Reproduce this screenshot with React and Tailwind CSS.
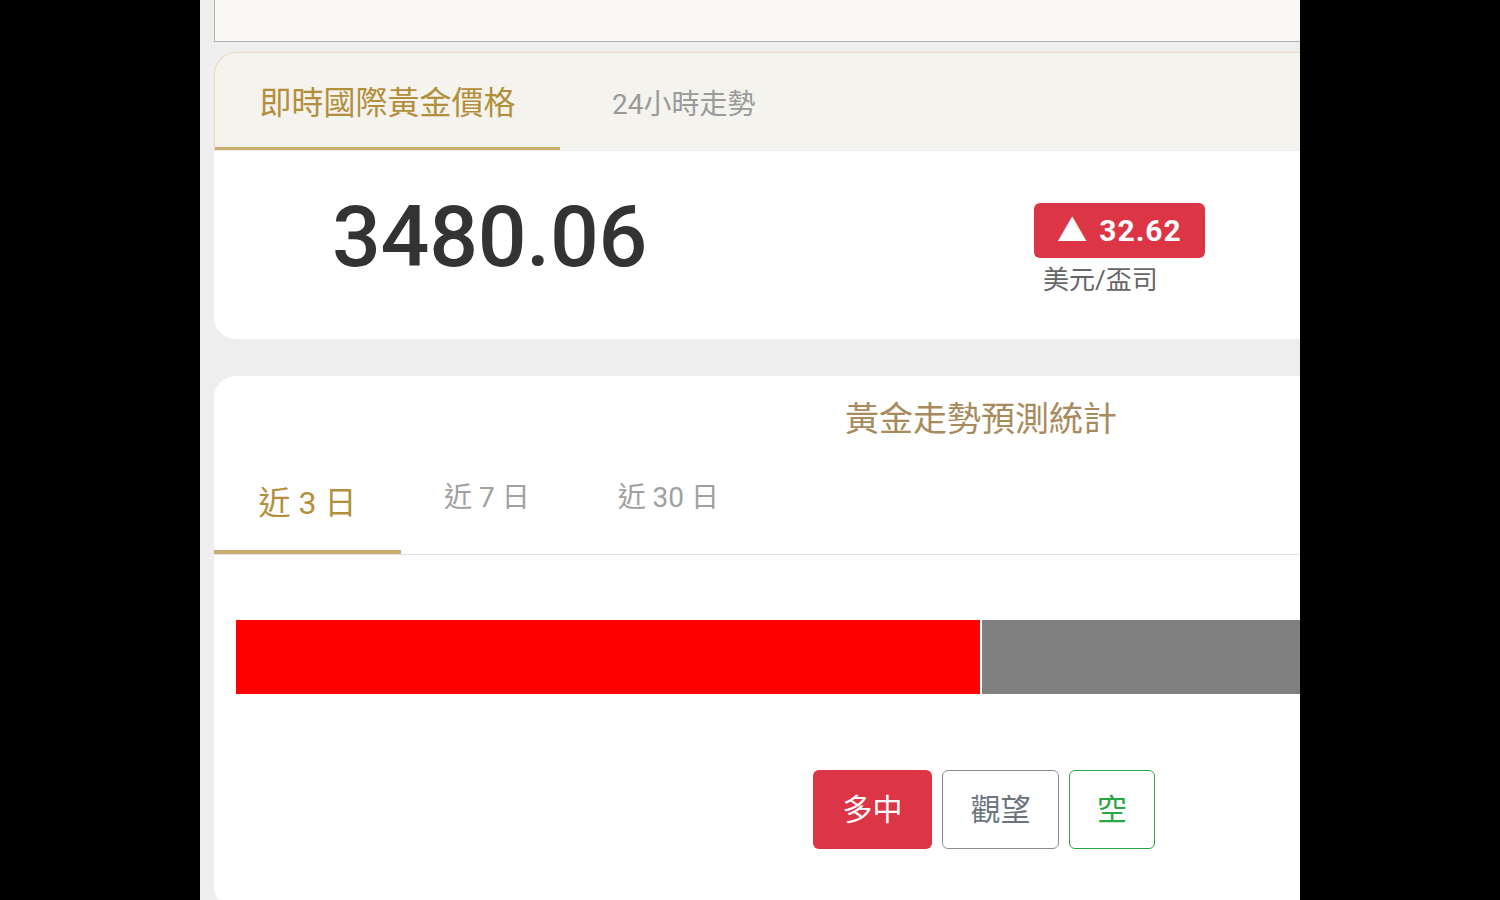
const cjk = { fontFamily: 'Roboto, "Noto Sans CJK TC", "Noto Sans", sans-serif' };

function TopTabs() {
  return (
    <div className="flex h-[98px] w-[1200px] rounded-tl-[22px] border-l border-t border-[#eadcb8] bg-[#f4f3ee]">
      <div className="flex w-[345px] items-center justify-center border-b-[3px] border-[#c9ad6a] pt-[6px]">
        <span className="text-[32px] text-[#b38f3c]">即時國際黃金價格</span>
      </div>
      <div className="flex items-center pl-[52px] pt-[6px]">
        <span className="text-[28px] text-[#9a9a9a]">24小時走勢</span>
      </div>
    </div>
  );
}

function PriceCard() {
  return (
    <div className="flex h-[188px] w-[1200px] items-center rounded-bl-[22px] bg-white">
      <div className="w-[820px] pl-[118px] pb-[16px]">
        <span className="text-[86px] font-medium leading-none tracking-[-0.3px] text-[#333333]">3480.06</span>
      </div>
      <div className="flex flex-col items-start pt-[10px]">
        <div className="flex h-[55px] w-[171px] items-center justify-center gap-[12px] rounded-[6px] bg-[#dc3545] text-white">
          <span className="text-[30px] leading-none">▲</span>
          <span className="text-[30px] font-bold leading-none tracking-[1px]">32.62</span>
        </div>
        <span className="pl-[9px] pt-[5px] text-[26px] leading-[34px] text-[#666666]">美元/盃司</span>
      </div>
    </div>
  );
}

function ForecastCard() {
  const tabs = ['近 7 日', '近 30 日'];
  return (
    <div className="flex w-[1534px] flex-col rounded-tl-[22px] rounded-bl-[22px] bg-white pb-[60px]">
      <div className="flex h-[71px] items-end justify-center pb-[3px]">
        <span className="text-[34px] leading-[50px] text-[#a88b5c]">黃金走勢預測統計</span>
      </div>
      <div className="flex h-[108px] border-b border-[#e3e3e3]">
        <div className="flex w-[187px] items-center justify-center border-b-[4px] border-[#c9ad6a] pt-[8px]">
          <span className="text-[32px] text-[#b38f3c]">近 3 日</span>
        </div>
        <div className="flex items-center gap-[88px] pl-[43px] pb-[6px]">
          {tabs.map((t) => (
            <span key={t} className="text-[28px] text-[#a0a0a0]">{t}</span>
          ))}
        </div>
      </div>
      <div className="mx-[22px] mt-[65px] flex h-[74px] gap-[2px]">
        <div className="flex-1 bg-[#ff0000]" />
        <div className="flex-1 bg-[#808080]" />
      </div>
      <div className="mt-[76px] flex justify-center gap-[10px] pl-[6px]">
        <div className="flex h-[79px] w-[119px] items-center justify-center rounded-[6px] bg-[#dc3545] text-[30px] text-white">多中</div>
        <div className="flex h-[79px] w-[117px] items-center justify-center rounded-[6px] border border-[#8a8f96] text-[30px] text-[#6c757d]">觀望</div>
        <div className="flex h-[79px] w-[86px] items-center justify-center rounded-[6px] border border-[#28a745] text-[30px] text-[#28a745]">空</div>
      </div>
    </div>
  );
}

export default function App() {
  return (
    <div className="flex h-[900px] w-[1500px] overflow-hidden bg-black" style={cjk}>
      <div className="ml-[200px] h-[900px] w-[1100px] overflow-hidden bg-[#eeeeee]">
        <div className="flex flex-col pl-[14px]">
          <div className="h-[42px] w-[1200px] border-b border-l border-[#b0b0b0] bg-[#faf9f6]" />
          <div className="mt-[10px]">
            <TopTabs />
          </div>
          <div className="mt-[1px]">
            <PriceCard />
          </div>
          <div className="mt-[37px]">
            <ForecastCard />
          </div>
        </div>
      </div>
    </div>
  );
}
